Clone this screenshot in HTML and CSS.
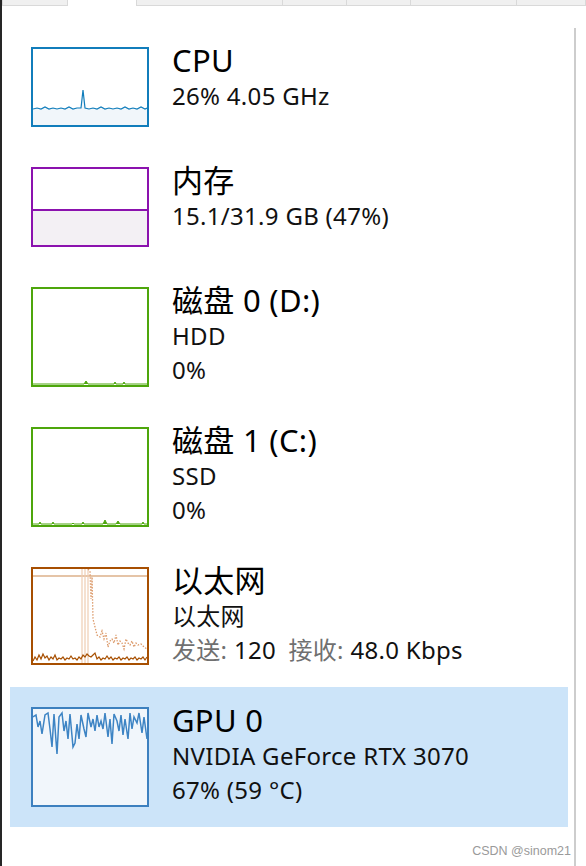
FILE: index.html
```html
<!DOCTYPE html>
<html lang="zh-CN">
<head>
  <meta charset="UTF-8" />
  <title>性能</title>
  <link rel="stylesheet" href="styles.css">
</head>
<body>
  <div class="window">
    <!-- Tab strip (bottom edge only) -->
    <div class="tabs">
      <div class="tab tab-1"></div>
      <div class="tab tab-active"></div>
      <div class="tab tab-3"></div>
      <div class="tab tab-4"></div>
      <div class="tab tab-5"></div>
      <div class="tab tab-6"></div>
      <div class="tab tab-rest"></div>
    </div>

    <div class="panel">
      <div class="list">

        <!-- CPU -->
        <div class="row">
          <div class="thumb cpu">
            <svg viewBox="0 0 114 76" width="114" height="76">
              <path class="fill-cpu" d="M0 60 L4 59 L8 60 L12 58 L16 60 L20 59 L24 60 L28 59 L32 60 L36 58 L40 60 L44 59 L48 59 L50 41 L52 59 L56 60 L60 59 L64 60 L68 58 L72 60 L76 59 L80 60 L84 59 L88 60 L92 58 L96 60 L100 59 L104 60 L108 58 L112 60 L114 59 L114 76 L0 76 Z"/>
              <path class="line-cpu" d="M0 60 L4 59 L8 60 L12 58 L16 60 L20 59 L24 60 L28 59 L32 60 L36 58 L40 60 L44 59 L48 59 L50 41 L52 59 L56 60 L60 59 L64 60 L68 58 L72 60 L76 59 L80 60 L84 59 L88 60 L92 58 L96 60 L100 59 L104 60 L108 58 L112 60 L114 59"/>
            </svg>
          </div>
          <div class="info">
            <div class="title">CPU</div>
            <div class="sub">26% 4.05 GHz</div>
          </div>
        </div>

        <!-- Memory -->
        <div class="row">
          <div class="thumb mem">
            <svg viewBox="0 0 114 76" width="114" height="76">
              <rect x="0" y="41" width="114" height="35" class="fill-mem"/>
              <line x1="0" y1="41" x2="114" y2="41" class="line-mem"/>
            </svg>
          </div>
          <div class="info">
            <div class="title">内存</div>
            <div class="sub">15.1/31.9 GB (47%)</div>
          </div>
        </div>

        <!-- Disk 0 -->
        <div class="row">
          <div class="thumb disk">
            <svg viewBox="0 0 114 96" width="114" height="96">
              <path class="line-disk" d="M0 95 L51 95 L53 92 L55 95 L81 95 L82 93 L83 95 L90 95 L91 93 L92 95 L114 95"/>
            </svg>
          </div>
          <div class="info">
            <div class="title">磁盘 0 (D:)</div>
            <div class="sub">HDD</div>
            <div class="sub">0%</div>
          </div>
        </div>

        <!-- Disk 1 -->
        <div class="row">
          <div class="thumb disk">
            <svg viewBox="0 0 114 96" width="114" height="96">
              <path class="line-disk" d="M0 95 L6 95 L7 93 L8 95 L19 95 L20 93 L21 95 L39 95 L40 94 L41 95 L49 95 L50 93 L51 95 L70 95 L72 91 L74 95 L83 95 L85 92 L87 95 L109 95 L110 93 L111 95 L114 95"/>
            </svg>
          </div>
          <div class="info">
            <div class="title">磁盘 1 (C:)</div>
            <div class="sub">SSD</div>
            <div class="sub">0%</div>
          </div>
        </div>

        <!-- Ethernet -->
        <div class="row">
          <div class="thumb eth">
            <svg viewBox="0 0 114 94" width="114" height="94">
              <line x1="0" y1="7" x2="114" y2="7" class="line-eth-max"/>
              <path class="line-eth-spike" d="M49 94 L49 0 M52 0 L52 94 M55 94 L55 0"/>
              <path class="line-eth-send" d="M55 0 L57 2 L58 30 L59 8 L60 50 L62 58 L64 66 L67 68 L69 62 L71 70 L73 64 L75 78 L77 72 L79 70 L81 74 L83 66 L85 76 L87 72 L89 74 L91 80 L93 70 L95 74 L97 76 L99 72 L101 78 L103 74 L105 76 L108 75 L111 78 L114 80"/>
              <path class="line-eth-recv" d="M0 92 L2 88 L4 91 L6 86 L8 90 L10 85 L12 89 L14 87 L16 91 L18 88 L20 90 L22 86 L24 91 L26 89 L28 90 L30 88 L32 91 L34 89 L36 90 L38 87 L40 90 L42 89 L44 91 L46 88 L48 90 L50 86 L52 88 L54 85 L56 87 L58 88 L60 86 L62 84 L64 90 L66 88 L68 91 L70 89 L72 90 L74 87 L76 90 L78 88 L80 91 L82 89 L84 90 L86 88 L88 91 L90 89 L92 90 L94 88 L96 91 L98 89 L100 90 L102 88 L104 91 L106 89 L108 90 L110 88 L112 91 L114 88"/>
            </svg>
          </div>
          <div class="info">
            <div class="title">以太网</div>
            <div class="sub">以太网</div>
            <div class="sub"><span class="label">发送:</span> 120 <span class="label label-gap">接收:</span> 48.0 Kbps</div>
          </div>
        </div>

        <!-- GPU (selected) -->
        <div class="row selected">
          <div class="thumb gpu">
            <svg viewBox="0 0 114 96" width="114" height="96">
              <path class="line-gpu" d="M0 8 L3 6 L5 18 L7 12 L9 25 L12 6 L15 4 L17 20 L19 38 L21 5 L24 45 L26 8 L29 4 L31 22 L33 12 L35 30 L37 5 L40 38 L42 34 L44 15 L46 30 L48 6 L51 20 L53 28 L55 4 L58 18 L60 10 L62 22 L64 6 L66 18 L68 12 L70 20 L72 4 L75 28 L77 10 L79 35 L81 5 L84 12 L86 22 L88 6 L90 26 L92 10 L95 30 L97 4 L99 20 L101 8 L104 14 L106 4 L109 24 L111 8 L114 30"/>
            </svg>
          </div>
          <div class="info">
            <div class="title">GPU 0</div>
            <div class="sub">NVIDIA GeForce RTX 3070</div>
            <div class="sub">67% (59 °C)</div>
          </div>
        </div>

      </div>
      <div class="scroll-line"></div>
    </div>

    <div class="watermark">CSDN @sinom21</div>
  </div>
</body>
</html>
```

FILE: styles.css
```css
body {
  margin: 0;
  background-color: #fff;
  font-family: 'Noto Sans', 'Noto Sans CJK SC', sans-serif;
  color: #000;
}

.window {
  position: relative;
  width: 586px;
  height: 866px;
  overflow: hidden;
  box-sizing: border-box;
  border-left: 2px solid #262626;
}

/* Tab strip */
.tabs {
  display: flex;
  height: 6px;
}

.tab {
  box-sizing: border-box;
  height: 6px;
  background-color: #f0f0f0;
  border: 1px solid #d9d9d9;
  border-top: none;
  margin-left: -1px;
}

.tab-1 { width: 66px; margin-left: 0; }
.tab-active { width: 70px; background-color: #fff; border-bottom: none; }
.tab-3 { width: 147px; }
.tab-4 { width: 65px; }
.tab-5 { width: 65px; }
.tab-6 { width: 107px; }
.tab-rest { flex: 1; }

/* Main panel */
.panel {
  display: flex;
}

.list {
  width: 558px;
  margin: 21px 0 0 8px;
}

.scroll-line {
  width: 2px;
  height: 840px;
  margin: 22px 0 0 6px;
  background-color: #cdcdcd;
}

.row {
  display: flex;
  align-items: flex-start;
  padding: 20px 0 20px 21px;
}

.row.selected {
  background-color: #cce4f9;
}

.thumb {
  flex: none;
  border: 2px solid;
  background-color: #fff;
  line-height: 0;
}

.thumb svg {
  display: block;
}

.cpu { border-color: #117dbb; }
.mem { border-color: #8b12ae; }
.disk { border-color: #4da60c; }
.eth { border-color: #a74f01; }
.gpu { border-color: #3d80bf; background-color: #f1f6fb; }

.fill-cpu { fill: #f1f6fa; }
.line-cpu { fill: none; stroke: #117dbb; stroke-width: 1.2; }

.fill-mem { fill: #f3f0f4; }
.line-mem { stroke: #8b12ae; stroke-width: 2; }

.line-disk { fill: #4da60c; stroke: #4da60c; stroke-width: 1; }

.line-eth-max { stroke: #dcb08a; stroke-width: 1.5; }
.line-eth-spike { fill: none; stroke: #efcdb3; stroke-width: 1.2; }
.line-eth-send { fill: none; stroke: #dc9a6a; stroke-width: 1.3; stroke-dasharray: 1.5 1.5; }
.line-eth-recv { fill: none; stroke: #a74f01; stroke-width: 1.2; }

.line-gpu { fill: none; stroke: #3d84c4; stroke-width: 1.5; }

/* Text */
.info {
  margin: -6px 0 0 23px;
}

.title {
  font-size: 31px;
  line-height: 38px;
  letter-spacing: 0.3px;
  color: #000;
}

.sub {
  font-size: 24px;
  line-height: 34px;
  letter-spacing: 0.3px;
  color: #111;
}

.label {
  color: #707070;
}

.label-gap {
  margin-left: 6px;
}

.watermark {
  position: absolute;
  right: 15px;
  bottom: 8px;
  font-family: 'Liberation Sans', sans-serif;
  font-size: 12.5px;
  color: #9a9a9a;
}
```
